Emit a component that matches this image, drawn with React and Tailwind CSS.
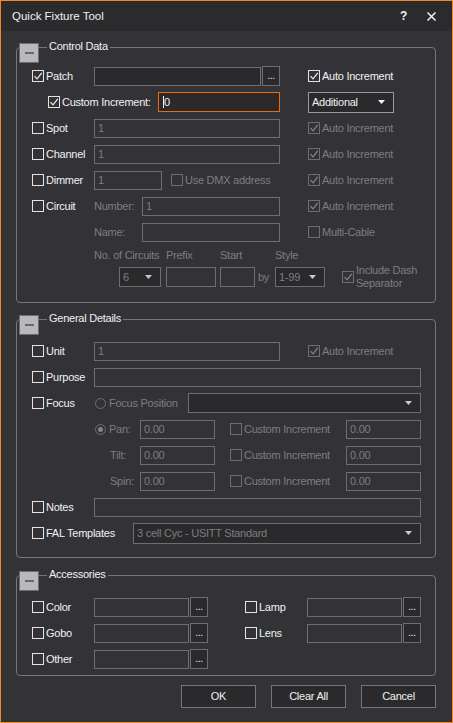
import React from 'react'

// colours taken from the dialog
const BG = 'bg-[#333337]'
const TXT = 'text-[#f1f1f1]'
const DIM = 'text-[#7d7d80]'

function Check({ checked, disabled, label, className = '' }) {
  return (
    <div className={`flex items-center ${className}`}>
      <span
        className={`w-[12px] h-[12px] shrink-0 border flex items-center justify-center ${
          disabled ? 'border-[#6e6e72]' : 'border-[#e4e4e4]'
        }`}
      >
        {checked ? (
          <svg width="10" height="10" viewBox="0 0 10 10">
            <path
              d="M1.5 5.2 L4 7.8 L8.8 1.8"
              fill="none"
              stroke={disabled ? '#86868a' : '#f1f1f1'}
              strokeWidth="1.2"
            />
          </svg>
        ) : null}
      </span>
      {label ? (
        <span className={`ml-[2px] whitespace-nowrap ${disabled ? DIM : TXT}`}>{label}</span>
      ) : null}
    </div>
  )
}

function Radio({ checked, label, className = '' }) {
  return (
    <div className={`flex items-center ${className}`}>
      <span className="w-[11px] h-[11px] shrink-0 rounded-full border border-[#6e6e72] flex items-center justify-center">
        {checked ? <span className="w-[5px] h-[5px] rounded-full bg-[#86868a]" /> : null}
      </span>
      <span className={`ml-[3px] whitespace-nowrap ${DIM}`}>{label}</span>
    </div>
  )
}

function Field({ w, dark, value, className = '' }) {
  return (
    <div
      className={`${w} h-[19px] shrink-0 border border-[#6e6e72] flex items-center px-[3px] ${
        dark ? 'bg-[#2a2a2c]' : ''
      } ${DIM} ${className}`}
    >
      {value}
    </div>
  )
}

function Dots({ className = '' }) {
  return (
    <div
      className={`w-[18px] h-[20px] shrink-0 border border-[#6e6e72] bg-[#2a2a2c] ${TXT} flex items-end justify-center pb-[4px] text-[10px] leading-none ${className}`}
    >
      ...
    </div>
  )
}

function Arrow({ color = '#d8d8d8' }) {
  return (
    <svg width="7" height="4" viewBox="0 0 7 4" className="shrink-0">
      <path d="M0 0 H7 L3.5 4 Z" fill={color} />
    </svg>
  )
}

function Select({ w, value, bright, className = '' }) {
  return (
    <div
      className={`${w} h-[20px] shrink-0 border ${
        bright ? 'border-[#9a9a9e]' : 'border-[#6e6e72]'
      } bg-[#2a2a2c] flex items-center justify-between pl-[3px] pr-[8px] ${className}`}
    >
      <span className={bright ? TXT : DIM}>{value}</span>
      <Arrow color={bright ? '#f1f1f1' : '#c8c8c8'} />
    </div>
  )
}

function Group({ title, className = '', children }) {
  return (
    <div className={`relative mx-[15px] w-[420px] border border-[#77777b] rounded-[4px] ${className}`}>
      <div className="absolute left-[2px] -top-[5px] w-[20px] h-[20px] border border-[#6e6e72] bg-[#b9b9bb] flex items-center justify-center">
        <span className="w-[9px] h-[2px] bg-[#6a6a6c]" />
      </div>
      <span className={`absolute left-[30px] -top-[8px] px-[2px] leading-[13px] ${BG} ${TXT}`}>{title}</span>
      {children}
    </div>
  )
}

function Row({ children, className = '' }) {
  return <div className={`flex h-[26px] items-center ${className}`}>{children}</div>
}

function Btn({ label }) {
  return (
    <div className={`w-[75px] h-[23px] border border-[#77777b] bg-[#2a2a2c] flex items-center justify-center ${TXT}`}>
      {label}
    </div>
  )
}

export default function App() {
  return (
    <div
      className={`w-[453px] h-[723px] border border-[#f08a1e] ${BG} text-[11px] leading-[13px] tracking-[-0.25px] font-['Liberation_Sans',Arial,sans-serif] overflow-hidden`}
    >
      {/* title bar */}
      <div className="h-[30px] bg-[#2b2b2e] flex items-center pl-[11px] pr-[16px]">
        <span className={`text-[11.5px] tracking-normal ${TXT}`}>Quick Fixture Tool</span>
        <span className={`ml-auto text-[12px] font-bold ${TXT}`}>?</span>
        <svg width="9" height="9" viewBox="0 0 9 9" className="ml-[20px]">
          <path d="M0.5 0.5 L8.5 8.5 M8.5 0.5 L0.5 8.5" stroke="#f1f1f1" strokeWidth="1.5" />
        </svg>
      </div>

      {/* Control Data */}
      <Group title="Control Data" className="mt-[16px] pt-[15px] pb-[15px] pl-[15px]">
        <Row>
          <Check checked label="Patch" className="w-[62px]" />
          <Field w="w-[167px]" dark />
          <Dots className="ml-[1px]" />
          <Check checked label="Auto Increment" className="ml-[28px]" />
        </Row>
        <Row>
          <Check checked label="Custom Increment:" className="ml-[16px] w-[110px]" />
          <div className={`w-[122px] h-[20px] border border-[#ee6a12] bg-[#2a2a2c] flex items-center pl-[4px] ${TXT}`}>
            <span className="border-l border-[#f1f1f1] leading-[12px]">0</span>
          </div>
          <Select w="w-[86px]" value="Additional" bright className="ml-[28px] h-[21px]" />
        </Row>
        <Row>
          <Check label="Spot" className="w-[62px]" />
          <Field w="w-[186px]" value="1" />
          <Check checked disabled label="Auto Increment" className="ml-[28px]" />
        </Row>
        <Row>
          <Check label="Channel" className="w-[62px]" />
          <Field w="w-[186px]" value="1" />
          <Check checked disabled label="Auto Increment" className="ml-[28px]" />
        </Row>
        <Row>
          <Check label="Dimmer" className="w-[62px]" />
          <Field w="w-[68px]" value="1" />
          <Check disabled label="Use DMX address" className="ml-[9px] w-[109px]" />
          <Check checked disabled label="Auto Increment" className="ml-[28px]" />
        </Row>
        <Row>
          <Check label="Circuit" className="w-[62px]" />
          <span className={`w-[48px] ${DIM}`}>Number:</span>
          <Field w="w-[138px]" value="1" />
          <Check checked disabled label="Auto Increment" className="ml-[28px]" />
        </Row>
        <Row>
          <span className="w-[62px]" />
          <span className={`w-[48px] ${DIM}`}>Name:</span>
          <Field w="w-[138px]" />
          <Check disabled label="Multi-Cable" className="ml-[28px]" />
        </Row>
        <div className={`flex h-[20px] items-center pl-[62px] ${DIM}`}>
          <span className="w-[72px] min-w-0 shrink-0 whitespace-nowrap">No. of Circuits</span>
          <span className="w-[54px] shrink-0">Prefix</span>
          <span className="w-[55px] shrink-0">Start</span>
          <span>Style</span>
        </div>
        <div className="flex h-[20px] mt-[2px] items-center pl-[87px]">
          <Select w="w-[42px]" value="6" className="pr-[6px]" />
          <Field w="w-[50px]" className="ml-[5px] h-[20px]" />
          <Field w="w-[35px]" className="ml-[4px] h-[20px]" />
          <span className={`w-[20px] pl-[3px] ${DIM}`}>by</span>
          <Select w="w-[50px]" value="1-99" className="pr-[6px]" />
          <div className="flex items-center ml-[17px]">
            <Check checked disabled />
            <span className={`ml-[2px] ${DIM}`}>
              Include Dash
              <br />
              Separator
            </span>
          </div>
        </div>
      </Group>

      {/* General Details */}
      <Group title="General Details" className="mt-[16px] pt-[18px] pb-[11px] pl-[15px]">
        <Row>
          <Check label="Unit" className="w-[62px]" />
          <Field w="w-[186px]" value="1" />
          <Check checked disabled label="Auto Increment" className="ml-[28px]" />
        </Row>
        <Row>
          <Check label="Purpose" className="w-[62px]" />
          <Field w="w-[327px]" />
        </Row>
        <Row>
          <Check label="Focus" className="w-[62px]" />
          <Radio label="Focus Position" className="ml-[1px] w-[93px]" />
          <Select w="w-[233px]" value="" />
        </Row>
        <Row>
          <span className="w-[62px]" />
          <Radio checked label="Pan:" className="ml-[1px] w-[45px]" />
          <Field w="w-[75px]" value="0.00" />
          <Check disabled label="Custom Increment" className="ml-[15px] w-[116px]" />
          <Field w="w-[75px]" value="0.00" />
        </Row>
        <Row>
          <span className="w-[62px]" />
          <span className={`ml-[16px] w-[30px] ${DIM}`}>Tilt:</span>
          <Field w="w-[75px]" value="0.00" />
          <Check disabled label="Custom Increment" className="ml-[15px] w-[116px]" />
          <Field w="w-[75px]" value="0.00" />
        </Row>
        <Row>
          <span className="w-[62px]" />
          <span className={`ml-[16px] w-[30px] ${DIM}`}>Spin:</span>
          <Field w="w-[75px]" value="0.00" />
          <Check disabled label="Custom Increment" className="ml-[15px] w-[116px]" />
          <Field w="w-[75px]" value="0.00" />
        </Row>
        <Row>
          <Check label="Notes" className="w-[62px]" />
          <Field w="w-[327px]" />
        </Row>
        <Row>
          <Check label="FAL Templates" className="w-[101px]" />
          <Select w="w-[288px]" value="3 cell Cyc - USITT Standard" className="h-[21px]" />
        </Row>
      </Group>

      {/* Accessories */}
      <Group title="Accessories" className="mt-[17px] pt-[18px] pb-[3px] pl-[15px]">
        <Row>
          <Check label="Color" className="w-[62px]" />
          <Field w="w-[95px]" />
          <Dots className="ml-[1px]" />
          <Check label="Lamp" className="ml-[37px] w-[62px]" />
          <Field w="w-[95px]" />
          <Dots className="ml-[1px]" />
        </Row>
        <Row>
          <Check label="Gobo" className="w-[62px]" />
          <Field w="w-[95px]" />
          <Dots className="ml-[1px]" />
          <Check label="Lens" className="ml-[37px] w-[62px]" />
          <Field w="w-[95px]" />
          <Dots className="ml-[1px]" />
        </Row>
        <Row>
          <Check label="Other" className="w-[62px]" />
          <Field w="w-[95px]" />
          <Dots className="ml-[1px]" />
        </Row>
      </Group>

      <div className="flex justify-end gap-[15px] mt-[9px] pr-[16px]">
        <Btn label="OK" />
        <Btn label="Clear All" />
        <Btn label="Cancel" />
      </div>
    </div>
  )
}
